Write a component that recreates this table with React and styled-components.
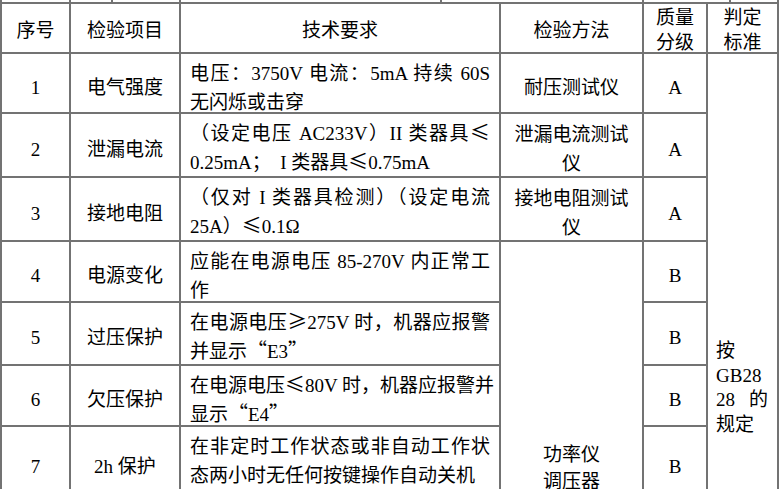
import React from "react";
import styled, { createGlobalStyle } from "styled-components";

const rows = [
  {
    no: "1",
    item: "电气强度",
    req: ["电压：3750V 电流：5mA 持续 60S", "无闪烁或击穿"],
    method: ["耐压测试仪"],
    grade: "A",
  },
  {
    no: "2",
    item: "泄漏电流",
    req: ["（设定电压 AC233V）II 类器具≤", "0.25mA；  I 类器具≤0.75mA"],
    method: ["泄漏电流测试", "仪"],
    grade: "A",
  },
  {
    no: "3",
    item: "接地电阻",
    req: ["（仅对 I 类器具检测）（设定电流", "25A）≤0.1Ω"],
    method: ["接地电阻测试", "仪"],
    grade: "A",
  },
  {
    no: "4",
    item: "电源变化",
    req: ["应能在电源电压 85-270V 内正常工", "作"],
    grade: "B",
  },
  {
    no: "5",
    item: "过压保护",
    req: ["在电源电压≥275V 时，机器应报警", "并显示“E3”"],
    grade: "B",
  },
  {
    no: "6",
    item: "欠压保护",
    req: ["在电源电压≤80V 时，机器应报警并", "显示“E4”"],
    grade: "B",
  },
  {
    no: "7",
    item: "2h 保护",
    req: ["在非定时工作状态或非自动工作状", "态两小时无任何按键操作自动关机"],
    grade: "B",
  },
];

// wide symbols as in the Song-style source font
const symAlign = { "≤": "center", "≥": "center", "“": "right", "”": "left" };

const withSymbols = (text) =>
  text.split(/([≤≥“”])/).map((part, i) =>
    symAlign[part] ? (
      <Sym key={i} $align={symAlign[part]}>
        {part}
      </Sym>
    ) : (
      part
    )
  );

const App = () => {
  return (
    <Page>
      <GlobalStyle />
      <PrevTail>
        {[0, 1, 2, 3, 4, 5, 6].map((i) => (
          <TailCell key={i} />
        ))}
      </PrevTail>
      <Table>
        <HeadCell>序号</HeadCell>
        <HeadCell>检验项目</HeadCell>
        <HeadCell>技术要求</HeadCell>
        <HeadCell>检验方法</HeadCell>
        <HeadCell>
          <Line>质量</Line>
          <Line>分级</Line>
        </HeadCell>
        <HeadCell>
          <Line>判定</Line>
          <Line>标准</Line>
        </HeadCell>

        {rows.map((r, i) => (
          <React.Fragment key={r.no}>
            <Cell>{r.no}</Cell>
            <Cell>{r.item}</Cell>
            <ReqCell>
              {r.req.map((t, j) => (
                <Line key={j} $fill={j < r.req.length - 1}>
                  {withSymbols(t)}
                </Line>
              ))}
            </ReqCell>
            {r.method && (
              <Cell>
                <div>
                  {r.method.map((t) => (
                    <Line key={t}>{t}</Line>
                  ))}
                </div>
              </Cell>
            )}
            {i === 3 && (
              <MergedMethod>
                <Line>功率仪</Line>
                <Line>调压器</Line>
              </MergedMethod>
            )}
            <Cell>{r.grade}</Cell>
            {i === 0 && (
              <Standard>
                <Line>按</Line>
                <Line>GB28</Line>
                <Line $fill>28 的</Line>
                <Line>规定</Line>
              </Standard>
            )}
          </React.Fragment>
        ))}
      </Table>
    </Page>
  );
};

export default App;

const GlobalStyle = createGlobalStyle`
  html, body {
    margin: 0;
    padding: 0;
    background: #ffffff;
    overflow: hidden;
  }
  body {
    font-family: "Liberation Serif", "Noto Sans CJK SC", serif;
    font-size: 19px;
    color: #000;
  }
`;

const Page = styled.div`
  width: 780px;
  height: 489px;
  overflow: hidden;
  background: #fff;
`;

const LINE = "#737373";

const PrevTail = styled.div`
  display: grid;
  grid-template-columns: 67px 40px 66px 259px 200px 85px 46px;
  column-gap: 2px;
  padding: 0 2px;
  width: max-content;
  height: 2px;
  background: ${LINE};
`;

const TailCell = styled.div`
  background: #fff;
`;

const Table = styled.div`
  display: grid;
  grid-template-columns: 67px 108px 318px 141px 62px 69px;
  grid-template-rows: 48px 58px 62px 62px 59px 61px 59px 70px;
  gap: 2px;
  padding: 2px;
  width: max-content;
  background: ${LINE};
`;

const HeadCell = styled.div`
  background: #fff;
  display: flex;
  flex-direction: column;
  align-items: center;
  justify-content: center;
  padding-top: 4px;
  line-height: 25px;
  text-align: center;
`;

const Cell = styled.div`
  background: #fff;
  display: flex;
  align-items: center;
  justify-content: center;
  padding-top: 8px;
  line-height: 29px;
  text-align: center;
`;

const ReqCell = styled.div`
  background: #fff;
  padding: 5px 9px 0 9px;
  line-height: 29px;
`;

const Line = styled.div`
  white-space: pre;
  text-align: ${(p) => (p.$fill ? "justify" : "inherit")};
  text-align-last: ${(p) => (p.$fill ? "justify" : "auto")};
`;

const Sym = styled.span`
  display: inline-block;
  width: 1em;
  font-family: "Noto Sans CJK SC", sans-serif;
  font-size: 1.05em;
  line-height: 1;
  text-align: ${(p) => p.$align};
`;

const MergedMethod = styled.div`
  background: #fff;
  grid-row: span 4;
  padding-top: 199px;
  line-height: 27px;
  text-align: center;
`;

const Standard = styled.div`
  background: #fff;
  grid-row: span 7;
  padding: 285px 9px 0 8px;
  line-height: 24.5px;
`;
